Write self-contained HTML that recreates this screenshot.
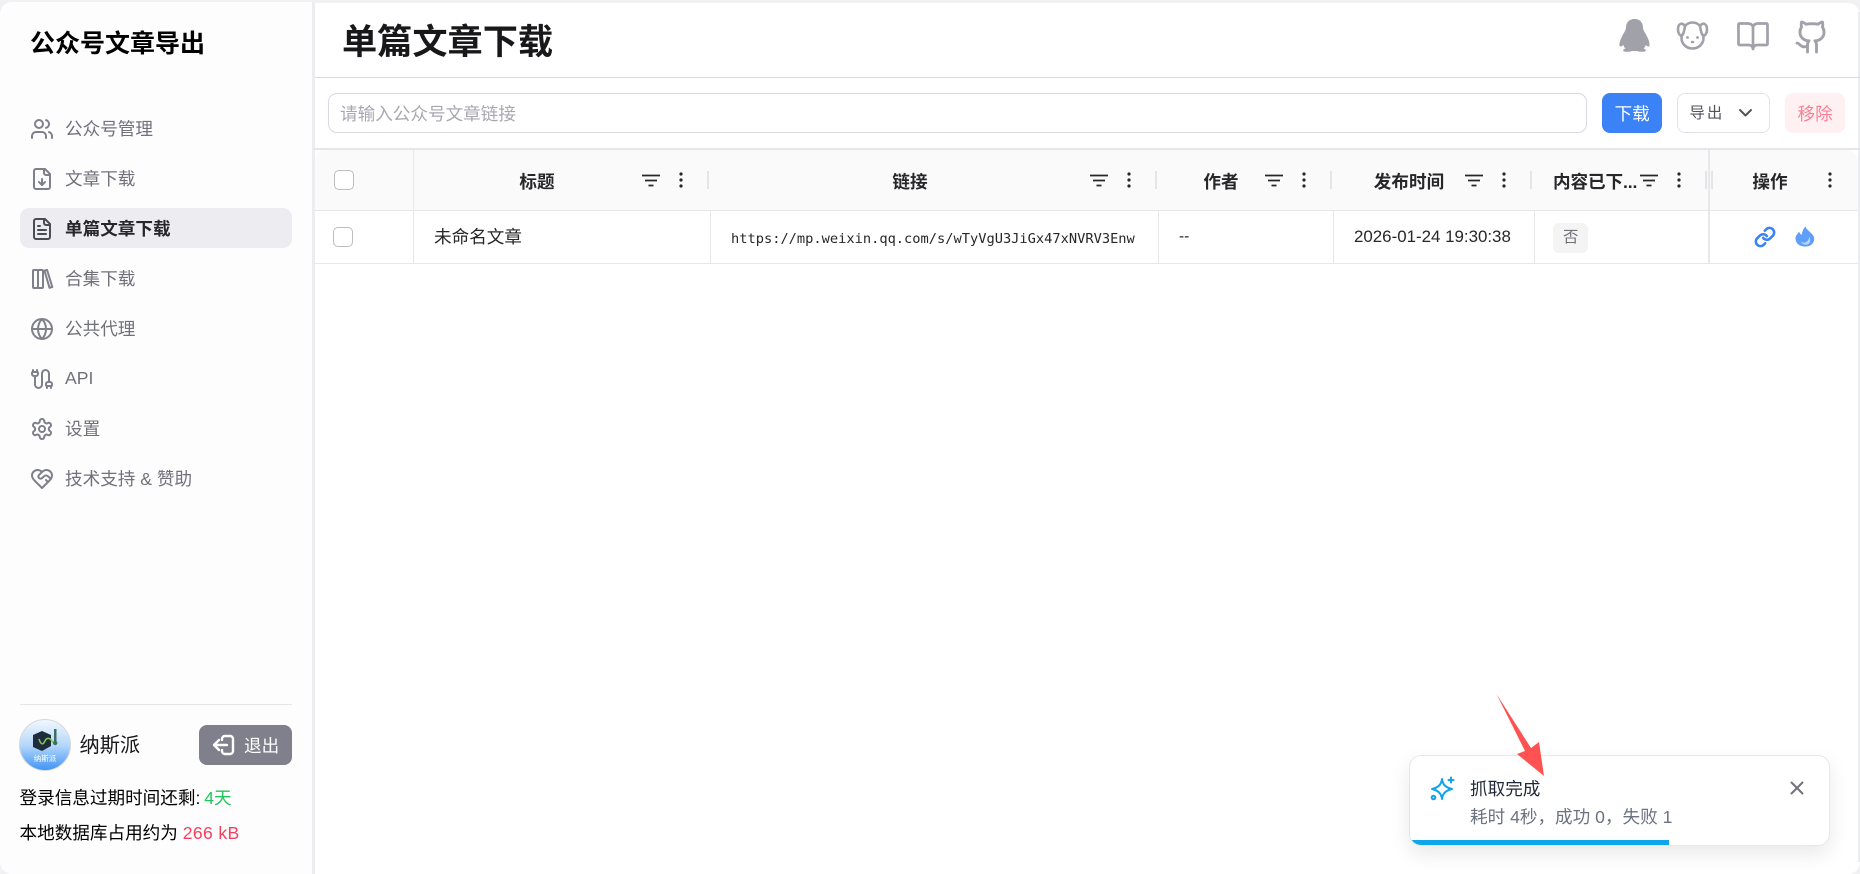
<!DOCTYPE html>
<html lang="zh-CN">
<head>
<meta charset="utf-8">
<title>单篇文章下载</title>
<style>
*{box-sizing:border-box;margin:0;padding:0}
html,body{width:1860px;height:874px;overflow:hidden;background:#f1f1f4;font-family:"Liberation Sans","Noto Sans CJK SC",sans-serif;color:#18181b}
.a{position:absolute;white-space:nowrap}
.t{position:absolute;white-space:nowrap;line-height:24px;height:24px;font-size:17.6px}
svg{position:absolute;overflow:visible}
.ic{fill:none;stroke:#7f808b;stroke-width:2;stroke-linecap:round;stroke-linejoin:round}
.nav{color:#71717a}
.th{font-weight:700;color:#27272a;text-align:center;transform:translateX(-50%)}
.hd{position:absolute;top:171px;width:2px;height:18px;background:#e4e4e9}
.vl{position:absolute;width:1px;background:#e8e8ea}
.cb{position:absolute;width:20px;height:20px;border:1px solid #bdbdc2;border-radius:5px;background:#fff}
.fl{stroke:#27272a;stroke-width:1.8}
.dt{fill:#27272a}
</style>
</head>
<body>
<!-- sidebar -->
<div class="a" style="left:0;top:2px;width:313px;height:872px;background:#fdfdfd;border-radius:12px 0 0 12px"></div>
<div class="a" style="left:312px;top:2px;width:3px;height:872px;background:#ecedf1"></div>
<!-- main -->
<div class="a" style="left:315px;top:3px;width:1545px;height:871px;background:#fff;border-radius:0 12px 12px 0"></div>
<div class="a" style="left:1858px;top:12px;width:2px;height:850px;background:#ecedf1"></div>

<div class="t" style="left:30px;top:30px;font-size:25px;font-weight:700;color:#000;transform:translateY(2px)">公众号文章导出</div>

<!-- nav -->
<div class="a" style="left:20px;top:208px;width:272px;height:40px;background:#ededf1;border-radius:9px"></div>

<svg class="ic" style="left:30px;top:117px" width="24" height="24" viewBox="0 0 24 24"><path d="M16 21v-2a4 4 0 0 0-4-4H6a4 4 0 0 0-4 4v2"/><circle cx="9" cy="7" r="4"/><path d="M22 21v-2a4 4 0 0 0-3-3.87"/><path d="M16 3.13a4 4 0 0 1 0 7.75"/></svg>
<div class="t nav" style="left:65px;top:117px">公众号管理</div>

<svg class="ic" style="left:30px;top:167px" width="24" height="24" viewBox="0 0 24 24"><path d="M15 2H6a2 2 0 0 0-2 2v16a2 2 0 0 0 2 2h12a2 2 0 0 0 2-2V7Z"/><path d="M14 2v4a2 2 0 0 0 2 2h4"/><path d="M12 18v-6"/><path d="m9 15 3 3 3-3"/></svg>
<div class="t nav" style="left:65px;top:167px">文章下载</div>

<svg class="ic" style="left:30px;top:217px;stroke:#4b4c55" width="24" height="24" viewBox="0 0 24 24"><path d="M15 2H6a2 2 0 0 0-2 2v16a2 2 0 0 0 2 2h12a2 2 0 0 0 2-2V7Z"/><path d="M14 2v4a2 2 0 0 0 2 2h4"/><path d="M10 9H8"/><path d="M16 13H8"/><path d="M16 17H8"/></svg>
<div class="t" style="left:65px;top:217px;font-weight:700;color:#27272a">单篇文章下载</div>

<svg class="ic" style="left:30px;top:267px" width="24" height="24" viewBox="0 0 24 24"><rect x="3" y="3" width="5" height="18" rx="1"/><rect x="8" y="3" width="5" height="18" rx="1"/><path d="M14.5 3.6l2.6-.6 5.2 17-2.8.8z"/></svg>
<div class="t nav" style="left:65px;top:267px">合集下载</div>

<svg class="ic" style="left:30px;top:317px" width="24" height="24" viewBox="0 0 24 24"><circle cx="12" cy="12" r="10"/><path d="M12 2a14.5 14.5 0 0 0 0 20 14.5 14.5 0 0 0 0-20"/><path d="M2 12h20"/></svg>
<div class="t nav" style="left:65px;top:317px">公共代理</div>

<svg class="ic" style="left:30px;top:367px" width="24" height="24" viewBox="0 0 24 24"><path d="M17 21v-2a1 1 0 0 1-1-1v-1a2 2 0 0 1 2-2h2a2 2 0 0 1 2 2v1a1 1 0 0 1-1 1"/><path d="M19 15V6.5a3.5 3.5 0 0 0-7 0v11a3.5 3.5 0 0 1-7 0V9"/><path d="M21 21v-2h-4"/><path d="M3 5h4V3"/><path d="M7 5a1 1 0 0 1 1 1v1a2 2 0 0 1-2 2H4a2 2 0 0 1-2-2V6a1 1 0 0 1 1-1V3"/></svg>
<div class="t nav" style="left:65px;top:366px">API</div>

<svg class="ic" style="left:30px;top:417px" width="24" height="24" viewBox="0 0 24 24"><path d="M12.22 2h-.44a2 2 0 0 0-2 2v.18a2 2 0 0 1-1 1.73l-.43.25a2 2 0 0 1-2 0l-.15-.08a2 2 0 0 0-2.73.73l-.22.38a2 2 0 0 0 .73 2.73l.15.1a2 2 0 0 1 1 1.72v.51a2 2 0 0 1-1 1.74l-.15.09a2 2 0 0 0-.73 2.73l.22.38a2 2 0 0 0 2.73.73l.15-.08a2 2 0 0 1 2 0l.43.25a2 2 0 0 1 1 1.73V20a2 2 0 0 0 2 2h.44a2 2 0 0 0 2-2v-.18a2 2 0 0 1 1-1.73l.43-.25a2 2 0 0 1 2 0l.15.08a2 2 0 0 0 2.73-.73l.22-.39a2 2 0 0 0-.73-2.73l-.15-.08a2 2 0 0 1-1-1.74v-.5a2 2 0 0 1 1-1.74l.15-.09a2 2 0 0 0 .73-2.73l-.22-.38a2 2 0 0 0-2.73-.73l-.15.08a2 2 0 0 1-2 0l-.43-.25a2 2 0 0 1-1-1.73V4a2 2 0 0 0-2-2z"/><circle cx="12" cy="12" r="3"/></svg>
<div class="t nav" style="left:65px;top:417px">设置</div>

<svg class="ic" style="left:30px;top:467px" width="24" height="24" viewBox="0 0 24 24"><path d="M19 14c1.49-1.46 3-3.21 3-5.5A5.5 5.5 0 0 0 16.5 3c-1.76 0-3 .5-4.5 2-1.5-1.5-2.74-2-4.5-2A5.5 5.5 0 0 0 2 8.5c0 2.3 1.5 4.05 3 5.5l7 7Z"/><path d="M12 5 9.04 7.96a2.17 2.17 0 0 0 0 3.08c.82.82 2.13.85 3 .07l2.07-1.9a2.82 2.82 0 0 1 3.79 0l2.96 2.66"/><path d="m18 15-2-2"/></svg>
<div class="t nav" style="left:65px;top:467px">技术支持 &amp; 赞助</div>

<!-- sidebar footer -->
<div class="a" style="left:20px;top:704px;width:272px;height:1px;background:#e6e6ea"></div>
<svg style="left:19px;top:719px" width="52" height="52" viewBox="0 0 52 52">
<defs><linearGradient id="g" x1="0" y1="0" x2="0" y2="1"><stop offset="0" stop-color="#f2f8fe"/><stop offset=".5" stop-color="#b5d8fb"/><stop offset="1" stop-color="#3f93f5"/></linearGradient></defs>
<circle cx="26" cy="26" r="25.5" fill="url(#g)" stroke="#d8d8dc"/>
<path d="M14 16l9-4 9 4v11l-9 5-9-4z" fill="#1e2c3c"/>
<path d="M20 20c2 6 4 6 6 2s5-3 7 0 3 1 4-1" fill="none" stroke="#7fc25a" stroke-width="1.6"/>
<rect x="35" y="10" width="2.5" height="13" fill="#3c6e63"/><circle cx="36.2" cy="24" r="2.2" fill="#3c6e63"/>
<text x="26" y="42" text-anchor="middle" font-size="7.5" fill="#fff" font-family="'Liberation Sans','Noto Sans CJK SC',sans-serif">纳斯派</text>
</svg>
<div class="t" style="left:79.5px;top:734px;font-size:20.2px;color:#18181b">纳斯派</div>
<div class="a" style="left:199px;top:725px;width:93px;height:40px;background:#7f808b;border-radius:8px"></div>
<svg style="left:212px;top:733px;fill:none;stroke:#fff;stroke-width:2.4;stroke-linecap:round;stroke-linejoin:round" width="24" height="24" viewBox="0 0 24 24"><path d="M10 7V6a3 3 0 0 1 3-3h5a3 3 0 0 1 3 3v12a3 3 0 0 1-3 3h-5a3 3 0 0 1-3-3v-1"/><path d="M15 12H3"/><path d="m7 7-5 5 5 5"/></svg>
<div class="t" style="left:244px;top:734px;color:#fff">退出</div>
<div class="t" style="left:19.5px;top:786px;color:#000">登录信息过期时间还剩: <span style="color:#22c55e;margin-left:-1px">4天</span></div>
<div class="t" style="left:19.5px;top:821px;color:#000">本地数据库占用约为 <span style="color:#f43f5e;letter-spacing:.35px">266 kB</span></div>

<!-- header -->
<div class="t" style="left:342px;top:23px;height:40px;line-height:40px;font-size:35.2px;font-weight:700;color:#18181b">单篇文章下载</div>
<div class="a" style="left:315px;top:77px;width:1545px;height:1px;background:#dcdce2"></div>

<svg style="left:1619px;top:19px" width="31" height="33" viewBox="0 0 29 33" preserveAspectRatio="none"><path fill="#a1a1aa" d="M14.5 0C9 0 6.5 4 6.5 9 6.5 11 5 13 3.5 16 1.5 20 0 24 .5 27 1 28 2.5 27.5 4 26c.5 1.5 1 2.5 2 3.5C4.5 30 3.5 31 4 32c1 1 6 1 8 0h5c2 1 7 1 8 0 .5-1-.5-2-2-2.5 1-1 1.5-2 2-3.500 1.500 1.500 3 2 3.500 1 .5-3-1-7-3-11C24 13 22.500 11 22.500 9c0-5-2.500-9-8-9z"/></svg>
<svg style="left:1677px;top:21px;fill:none;stroke:#a1a1aa;stroke-width:2.6;stroke-linecap:round;stroke-linejoin:round" width="31" height="29" viewBox="0 0 31 29"><path d="M5 14C4.500 15 4.500 16 4.500 17c0 6 5 10.500 11 10.500s11-4.500 11-10.500c0-1 0-2-.5-3"/><path d="M8 5C10 2.500 13 1.500 15.500 1.500S21 2.500 23 5"/><path d="M8 5C5 1 1 2.500 1 8.500c0 4 2.500 7.500 4.500 5.500 1.200-1.500 1.700-4 2.500-9z"/><path d="M23 5c3-4 7-2.500 7 3.500 0 4-2.500 7.500-4.500 5.500-1.200-1.500-1.700-4-2.500-9z"/><circle cx="10.500" cy="16.500" r="1.400" fill="#a1a1aa" stroke="none"/><circle cx="20.500" cy="16.500" r="1.400" fill="#a1a1aa" stroke="none"/><ellipse cx="15.500" cy="21" rx="1.800" ry="1.300" fill="#a1a1aa" stroke="none"/></svg>
<svg style="left:1737px;top:22px;fill:none;stroke:#a1a1aa;stroke-width:2.7;stroke-linecap:round;stroke-linejoin:round" width="32" height="29" viewBox="0 0 32 29"><path d="M16 4.500C15 2.500 13 1.500 11 1.500H2.500a1 1 0 0 0-1 1V22a1 1 0 0 0 1 1H12c2 0 3.500 1.500 4 4 .5-2.500 2-4 4-4h9.500a1 1 0 0 0 1-1V2.500a1 1 0 0 0-1-1H21c-2 0-4 1-5 3zM16 4.500V27"/></svg>
<svg style="left:1794px;top:18.500px;fill:none;stroke:#a1a1aa;stroke-width:1.9;stroke-linecap:round;stroke-linejoin:round" width="36" height="36" viewBox="0 0 24 24"><path d="M15 22v-4a4.800 4.800 0 0 0-1-3.500c3 0 6-2 6-5.500.08-1.250-.27-2.480-1-3.500.28-1.150.28-2.350 0-3.500 0 0-1 0-3 1.500-2.640-.5-5.360-.5-8 0C6 2 5 2 5 2c-.3 1.150-.3 2.350 0 3.500A5.403 5.403 0 0 0 4 9c0 3.500 3 5.500 6 5.500-.39.49-.68 1.050-.85 1.650-.17.6-.22 1.230-.15 1.850v4"/><path d="M9 18c-4.510 2-5-2-7-2"/></svg>

<!-- toolbar -->
<div class="a" style="left:328px;top:93px;width:1259px;height:40px;border:1.5px solid #d8dae3;border-radius:9px;background:#fff"></div>
<div class="t" style="left:340px;top:102px;color:#a8a8b2">请输入公众号文章链接</div>
<div class="a" style="left:1602px;top:93px;width:60px;height:40px;background:#3b82f6;border-radius:8px"></div>
<div class="t" style="left:1614.5px;top:102px;color:#fff">下载</div>
<div class="a" style="left:1677px;top:93px;width:93px;height:40px;border:1.5px solid #e2e3ea;border-radius:8px;background:#fff"></div>
<div class="t" style="left:1689.5px;top:102px;font-size:15.4px;letter-spacing:2px;color:#52525b">导出</div>
<svg style="left:1739px;top:109px;fill:none;stroke:#52525b;stroke-width:2;stroke-linecap:round;stroke-linejoin:round" width="13" height="8" viewBox="0 0 13 8"><path d="M1 1l5.500 5.500L12 1"/></svg>
<div class="a" style="left:1785px;top:93px;width:60px;height:40px;background:#fff1f2;border-radius:8px"></div>
<div class="t" style="left:1797.5px;top:102px;color:#fb7f96">移除</div>

<!-- table -->
<div class="a" style="left:314px;top:148px;width:1546px;height:2px;background:#e6e6ea"></div>
<div class="a" style="left:315px;top:150px;width:1543px;height:60px;background:#fafafa;border-radius:10px 12px 0 0"></div>
<div class="a" style="left:315px;top:210px;width:1543px;height:1px;background:#e7e7ea"></div>
<div class="a" style="left:315px;top:263px;width:1543px;height:1px;background:#e7e7ea"></div>
<div class="vl" style="left:413px;top:150px;height:113px"></div>
<div class="vl" style="left:710px;top:211px;height:52px"></div>
<div class="vl" style="left:1158px;top:211px;height:52px"></div>
<div class="vl" style="left:1333px;top:211px;height:52px"></div>
<div class="vl" style="left:1534px;top:211px;height:52px"></div>
<div class="vl" style="left:1708px;top:150px;height:113px;width:2px"></div>

<div class="hd" style="left:707px"></div>
<div class="hd" style="left:1155px"></div>
<div class="hd" style="left:1330px"></div>
<div class="hd" style="left:1530px"></div>
<div class="hd" style="left:1705px"></div>
<div class="hd" style="left:1711px"></div>

<div class="cb" style="left:334px;top:170px"></div>
<div class="cb" style="left:333px;top:227px"></div>

<div class="t th" style="left:537px;top:170px">标题</div>
<div class="t th" style="left:910px;top:170px">链接</div>
<div class="t th" style="left:1221px;top:170px">作者</div>
<div class="t th" style="left:1409px;top:170px">发布时间</div>
<div class="t" style="left:1553px;top:170px;font-weight:700;color:#27272a;letter-spacing:-.1px">内容已下...</div>
<div class="t th" style="left:1770px;top:170px">操作</div>

<!-- filter icons -->
<svg class="fl" style="left:642px;top:174px" width="18" height="13" viewBox="0 0 18 13"><path d="M0 1.500h18M3 6.500h12M6.500 11.500h5"/></svg>
<svg class="fl" style="left:1090px;top:174px" width="18" height="13" viewBox="0 0 18 13"><path d="M0 1.500h18M3 6.500h12M6.500 11.500h5"/></svg>
<svg class="fl" style="left:1265px;top:174px" width="18" height="13" viewBox="0 0 18 13"><path d="M0 1.500h18M3 6.500h12M6.500 11.500h5"/></svg>
<svg class="fl" style="left:1465px;top:174px" width="18" height="13" viewBox="0 0 18 13"><path d="M0 1.500h18M3 6.500h12M6.500 11.500h5"/></svg>
<svg class="fl" style="left:1640px;top:174px" width="18" height="13" viewBox="0 0 18 13"><path d="M0 1.500h18M3 6.500h12M6.500 11.500h5"/></svg>
<!-- dots -->
<svg class="dt" style="left:679px;top:172px" width="4" height="16" viewBox="0 0 4 16"><circle cx="2" cy="2" r="1.6"/><circle cx="2" cy="8" r="1.6"/><circle cx="2" cy="14" r="1.6"/></svg>
<svg class="dt" style="left:1127px;top:172px" width="4" height="16" viewBox="0 0 4 16"><circle cx="2" cy="2" r="1.6"/><circle cx="2" cy="8" r="1.6"/><circle cx="2" cy="14" r="1.6"/></svg>
<svg class="dt" style="left:1302px;top:172px" width="4" height="16" viewBox="0 0 4 16"><circle cx="2" cy="2" r="1.6"/><circle cx="2" cy="8" r="1.6"/><circle cx="2" cy="14" r="1.6"/></svg>
<svg class="dt" style="left:1502px;top:172px" width="4" height="16" viewBox="0 0 4 16"><circle cx="2" cy="2" r="1.6"/><circle cx="2" cy="8" r="1.6"/><circle cx="2" cy="14" r="1.6"/></svg>
<svg class="dt" style="left:1677px;top:172px" width="4" height="16" viewBox="0 0 4 16"><circle cx="2" cy="2" r="1.6"/><circle cx="2" cy="8" r="1.6"/><circle cx="2" cy="14" r="1.6"/></svg>
<svg class="dt" style="left:1828px;top:172px" width="4" height="16" viewBox="0 0 4 16"><circle cx="2" cy="2" r="1.6"/><circle cx="2" cy="8" r="1.6"/><circle cx="2" cy="14" r="1.6"/></svg>

<!-- row -->
<div class="t" style="left:434px;top:225px;color:#27272a">未命名文章</div>
<div class="t" style="left:731px;top:227px;font-family:'DejaVu Sans Mono','Liberation Mono',monospace;font-size:13.7px;color:#27272a">https://mp.weixin.qq.com/s/wTyVgU3JiGx47xNVRV3Enw</div>
<div class="t" style="left:1179px;top:225px;font-size:15.4px;color:#27272a">--</div>
<div class="t" style="left:1354px;top:225px;font-size:16.9px;color:#27272a">2026-01-24 19:30:38</div>
<div class="a" style="left:1553px;top:223px;width:35px;height:30px;background:#f4f4f5;border-radius:6px"></div>
<div class="t" style="left:1563px;top:226px;font-size:15.4px;color:#71717a">否</div>
<svg style="left:1753.5px;top:226px;fill:none;stroke:#3b82f6;stroke-width:2.8;stroke-linecap:round;stroke-linejoin:round" width="22" height="22" viewBox="0 0 24 24"><path d="M10 13a5 5 0 0 0 7.540.54l3-3a5 5 0 0 0-7.070-7.070l-1.720 1.710"/><path d="M14 11a5 5 0 0 0-7.540-.54l-3 3a5 5 0 0 0 7.070 7.070l1.710-1.710"/></svg>
<svg style="left:1795px;top:226px" width="20" height="21" viewBox="0 0 21 24" preserveAspectRatio="none"><path fill="#5f9ffa" d="M11 .5c1 4 6 6.500 8.500 11 2 4.500-.5 12-9 12-6 0-10-4-10-9.500C.5 11 3 8.500 4.500 6.500c.5 1.500 1 3 2.500 3.500C7.500 7 8.500 3 11 .5z"/><path fill="#b9d5fd" d="M14.500 11.500c.8 3-1 6.500-4 7.300-1.600.4-3.200 0-4.300-1 1 3 5 4.500 8 2.600 2.300-1.600 2.300-5.900.3-8.900z"/></svg>

<!-- toast -->
<div class="a" style="left:1409px;top:755px;width:421px;height:91px;background:#fff;border:1.5px solid #e8e8ec;border-radius:12px;box-shadow:0 8px 20px rgba(0,0,0,.09);overflow:hidden">
  <div style="position:absolute;left:0;bottom:0;width:259px;height:5px;background:#0ea5e9"></div>
</div>
<svg style="left:1431px;top:777px;fill:none;stroke:#0ea5e9;stroke-width:2;stroke-linecap:round;stroke-linejoin:round" width="24" height="24" viewBox="0 0 24 24"><path d="M11 2c.7 5.500 3.500 8.500 10 10-6.500 1.500-9.300 4.500-10 10-.7-5.500-3.500-8.500-10-10 6.500-1.500 9.300-4.500 10-10z"/><path d="M20 .5v5M17.500 3h5"/><circle cx="2.500" cy="20.500" r="1.800" fill="#fff"/></svg>
<div class="t" style="left:1470px;top:777px;color:#1f2937">抓取完成</div>
<div class="t" style="left:1470px;top:805px;color:#6b7280">耗时 4秒，成功 0，失败 1</div>
<svg style="left:1791px;top:782px;stroke:#71717a;stroke-width:2;stroke-linecap:round" width="12" height="12" viewBox="0 0 12 12"><path d="M.5.500l11 11M11.500.500l-11 11"/></svg>

<!-- arrow -->
<svg style="left:0;top:0" width="1860" height="874"><polygon fill="#ff5252" points="1496.5,694 1531,748 1539,742 1544,776 1517,754 1525,751"/></svg>
</body>
</html>
